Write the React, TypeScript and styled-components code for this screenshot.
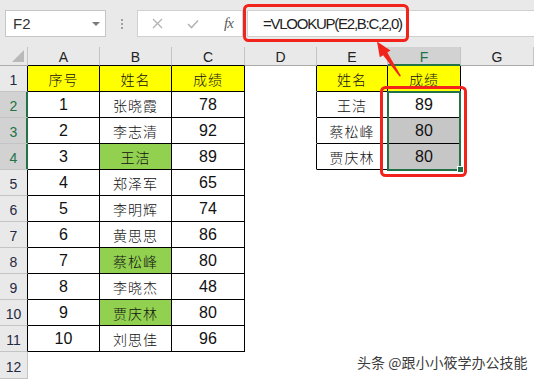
import styled, { createGlobalStyle, css } from 'styled-components';

const GREEN = '#217346';
const RED = '#f2231b';
const YELLOW = '#ffff00';
const LIME = '#92d050';
const SELECTED = '#c6c6c6';
const HEADER_BG = '#e9e9e9';
const HEADER_ON = '#d2d2d2';
const HEADER_LINE = '#c4c4c4';

const COL_WIDTHS = [28, 72, 72, 73, 72, 71, 73, 73];
const COLS = ['A', 'B', 'C', 'D', 'E', 'F', 'G'];

type CellData = { v?: string | number; fill?: string };

const people: [number, string, number, string?][] = [
  [1, '张晓霞', 78],
  [2, '李志清', 92],
  [3, '王洁', 89, LIME],
  [4, '郑泽军', 65],
  [5, '李明辉', 74],
  [6, '黄思思', 86],
  [7, '蔡松峰', 80, LIME],
  [8, '李晓杰', 48],
  [9, '贾庆林', 80, LIME],
  [10, '刘思佳', 96],
];

const lookup: [string, number, string?][] = [
  ['王洁', 89],
  ['蔡松峰', 80, SELECTED],
  ['贾庆林', 80, SELECTED],
];

// rows 1..12, cols A..G
const sheet: CellData[][] = Array.from({ length: 12 }, (_, i) => {
  const r = i + 1;
  const row: CellData[] = Array.from({ length: 7 }, () => ({}));
  if (r === 1) {
    row[0] = { v: '序号', fill: YELLOW };
    row[1] = { v: '姓名', fill: YELLOW };
    row[2] = { v: '成绩', fill: YELLOW };
    row[4] = { v: '姓名', fill: YELLOW };
    row[5] = { v: '成绩', fill: YELLOW };
  }
  const p = people[r - 2];
  if (p) {
    row[0] = { v: p[0] };
    row[1] = { v: p[1], fill: p[3] };
    row[2] = { v: p[2] };
  }
  const l = lookup[r - 2];
  if (l) {
    row[4] = { v: l[0] };
    row[5] = { v: l[1], fill: l[2] };
  }
  return row;
});

const boxed = (r: number, c: number) =>
  (r >= 1 && r <= 11 && c >= 0 && c <= 2) || (r >= 1 && r <= 4 && (c === 4 || c === 5));

const selectedRow = (r: number) => r >= 2 && r <= 4;

const GlobalStyle = createGlobalStyle`
  html, body {
    margin: 0;
    padding: 0;
    background: #fff;
  }
  body {
    overflow: hidden;
    font-family: 'Liberation Sans', 'Noto Sans CJK SC', sans-serif;
  }
`;

const Page = styled.div`
  position: relative;
  width: 534px;
  height: 379px;
  overflow: hidden;
  background: #fff;
`;

const FormulaBar = styled.div`
  display: flex;
  align-items: flex-start;
  height: 47px;
  box-sizing: border-box;
  padding: 10px 0 0 5px;
  background: ${HEADER_BG};
`;

const NameBox = styled.div`
  display: flex;
  align-items: center;
  justify-content: space-between;
  width: 101px;
  height: 27px;
  box-sizing: border-box;
  padding: 0 5px 0 7px;
  background: #fff;
  border: 1px solid #c6c6c6;
  font-size: 15px;
  color: #333;
`;

const Caret = styled.span`
  width: 0;
  height: 0;
  border-left: 4px solid transparent;
  border-right: 4px solid transparent;
  border-top: 4px solid #7a7a7a;
`;

const Grip = styled.div`
  display: flex;
  flex-direction: column;
  gap: 2px;
  margin: 9px 14px 0 15px;

  span {
    width: 2px;
    height: 2px;
    background: #a0a0a0;
  }
`;

const ButtonBox = styled.div`
  display: flex;
  align-items: center;
  gap: 24px;
  width: 106px;
  height: 27px;
  box-sizing: border-box;
  padding-left: 14px;
  background: #fff;
  border: 1px solid #d0d0d0;
`;

const Fx = styled.span`
  margin-left: 1px;
  font-family: 'Liberation Serif', serif;
  font-style: italic;
  font-size: 15px;
  color: #5c5c5c;
  letter-spacing: -1px;
`;

const FormulaInput = styled.div`
  flex: 1;
  display: flex;
  align-items: center;
  height: 27px;
  margin-left: 4px;
  box-sizing: border-box;
  padding-left: 15px;
  background: #fff;
  border: 1px solid #d0d0d0;
  border-right: none;
  font-size: 15px;
  letter-spacing: -1.25px;
  color: #222;
`;

const Grid = styled.div`
  display: grid;
  grid-template-columns: ${COL_WIDTHS.map((w) => `${w}px`).join(' ')};
  grid-template-rows: 19px repeat(11, 26px) 27px;
`;

const cellBase = css`
  box-sizing: border-box;
  display: flex;
  align-items: center;
  justify-content: center;
`;

const Corner = styled.div`
  ${cellBase};
  position: relative;
  background: ${HEADER_BG};
  border-right: 1px solid ${HEADER_LINE};
  border-bottom: 1px solid #ababab;

  &::after {
    content: '';
    position: absolute;
    right: 3px;
    bottom: 3px;
    border-left: 12px solid transparent;
    border-bottom: 12px solid #b9b9b9;
  }
`;

const ColHead = styled.div<{ $on?: boolean; $under: string }>`
  ${cellBase};
  padding-top: 1px;
  font-size: 14px;
  color: ${(p) => (p.$on ? GREEN : '#222')};
  background: ${(p) => (p.$on ? HEADER_ON : HEADER_BG)};
  border-right: 1px solid ${HEADER_LINE};
  border-bottom: 1px solid ${(p) => (p.$on ? GREEN : p.$under)};
  box-shadow: ${(p) => (p.$on ? `inset 0 -1px 0 ${GREEN}` : 'none')};
`;

const RowHead = styled.div<{ $on?: boolean; $edge: string }>`
  ${cellBase};
  align-items: flex-end;
  padding-bottom: 3px;
  font-size: 14px;
  color: ${(p) => (p.$on ? GREEN : '#1f2a44')};
  background: ${(p) => (p.$on ? HEADER_ON : HEADER_BG)};
  border-right: 1px solid ${(p) => (p.$on ? GREEN : p.$edge)};
  border-bottom: 1px solid ${HEADER_LINE};
  box-shadow: ${(p) => (p.$on ? `inset -1px 0 0 ${GREEN}` : 'none')};
`;

const Cell = styled.div<{ $fill?: string; $right: string; $bottom: string; $cjk?: boolean }>`
  ${cellBase};
  background: ${(p) => p.$fill || '#fff'};
  border-right: 1px solid ${(p) => p.$right};
  border-bottom: 1px solid ${(p) => p.$bottom};
  font-family: ${(p) =>
    p.$cjk ? "'Noto Sans CJK SC', sans-serif" : "'Liberation Sans', sans-serif"};
  font-size: ${(p) => (p.$cjk ? '14px' : '16px')};
  font-weight: ${(p) => (p.$cjk ? 300 : 400)};
  letter-spacing: ${(p) => (p.$cjk ? '1px' : '0')};
  color: #111;
`;

const Annotations = styled.svg`
  position: absolute;
  left: 0;
  top: 0;
  pointer-events: none;
`;

const Watermark = styled.div`
  position: absolute;
  left: 357px;
  top: 352px;
  font-family: 'Noto Sans CJK SC', sans-serif;
  font-size: 14px;
  color: #3c3c3c;
  white-space: nowrap;
  text-shadow: 0 0 2px #fff, 0 0 2px #fff, 1px 1px 0 #fff;
`;

const CancelIcon = () => (
  <svg width="11" height="11" viewBox="0 0 11 11">
    <path d="M1 1 L10 10 M10 1 L1 10" stroke="#b5b5b5" strokeWidth="1.4" fill="none" />
  </svg>
);

const EnterIcon = () => (
  <svg width="12" height="10" viewBox="0 0 12 10">
    <path d="M1 5 L4.5 8.5 L11 1.5" stroke="#b5b5b5" strokeWidth="1.6" fill="none" />
  </svg>
);

const line = (on: boolean) => (on ? '#000' : '#fff');

export default function App() {
  return (
    <Page>
      <GlobalStyle />
      <FormulaBar>
        <NameBox>
          F2
          <Caret />
        </NameBox>
        <Grip>
          <span />
          <span />
          <span />
        </Grip>
        <ButtonBox>
          <CancelIcon />
          <EnterIcon />
          <Fx>fx</Fx>
        </ButtonBox>
        <FormulaInput>=VLOOKUP(E2,B:C,2,0)</FormulaInput>
      </FormulaBar>

      <Grid>
        <Corner />
        {COLS.map((c, ci) => (
          <ColHead key={c} $on={c === 'F'} $under={boxed(1, ci) ? '#000' : '#ababab'}>
            {c}
          </ColHead>
        ))}
        {sheet.map((row, ri) => {
          const r = ri + 1;
          return [
            <RowHead key={`h${r}`} $on={selectedRow(r)} $edge={boxed(r, 0) ? '#000' : HEADER_LINE}>
              {r}
            </RowHead>,
            ...row.map((cell, ci) => (
              <Cell
                key={`${r}-${ci}`}
                $fill={cell.fill}
                $cjk={typeof cell.v === 'string'}
                $right={line(boxed(r, ci) || boxed(r, ci + 1))}
                $bottom={line(boxed(r, ci) || boxed(r + 1, ci))}
              >
                {cell.v}
              </Cell>
            )),
          ];
        })}
      </Grid>

      <Annotations width="534" height="379" viewBox="0 0 534 379">
        <rect x="388" y="92" width="72" height="78" fill="none" stroke={GREEN} strokeWidth="2" />
        <rect x="457.5" y="166.5" width="6" height="6" fill={GREEN} stroke="#fff" strokeWidth="1" />
        <rect x="244.5" y="5.5" width="163" height="35" rx="4" fill="none" stroke={RED} strokeWidth="3" />
        <rect x="381.5" y="87.5" width="84" height="88" rx="4" fill="none" stroke={RED} strokeWidth="3" />
        <polygon
          points="377,41.5 390.5,50.5 387.3,52.4 401,76 399.5,76.5 383.2,55.2 379.8,57.3"
          fill={RED}
        />
      </Annotations>

      <Watermark>头条 @跟小小筱学办公技能</Watermark>
    </Page>
  );
}
